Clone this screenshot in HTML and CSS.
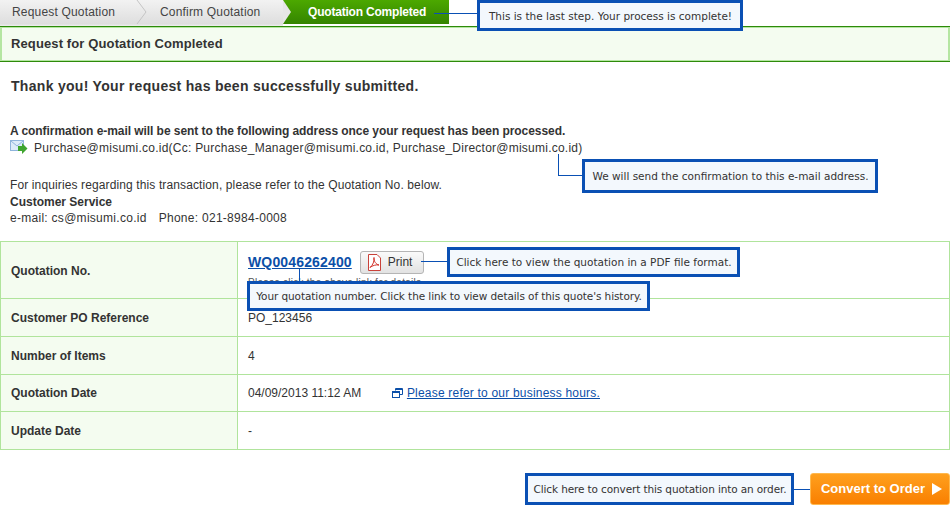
FILE: index.html

```html
<!DOCTYPE html>
<html lang="en">
<head>
  <meta charset="UTF-8" />
  <meta name="viewport" content="width=device-width, initial-scale=1.0"/>
  <title>Request for Quotation Completed</title>
  <link rel="stylesheet" href="styles.css">
</head>
<body>

  <div class="page">

    <div class="steps">
      <div class="steps-done">
        <div class="step step-first">Request Quotation</div>
        <svg class="step-arrow" width="16" height="24" viewBox="0 0 16 24"><path d="M1 0 L10 12 L1 24" fill="none" stroke="#c4c4c4"/></svg>
        <div class="step step-second">Confirm Quotation</div>
      </div>
      <div class="step-current">
        <svg class="step-notch" width="9" height="24" viewBox="0 0 9 24"><path d="M0 0 L8 12 L0 24 L0 0Z" fill="#e6e6e6"/></svg>
        Quotation Completed
      </div>
    </div>

    <h1 class="panel-title">Request for Quotation Completed</h1>

    <p class="thanks">Thank you! Your request has been successfully submitted.</p>

    <p class="confirm-head">A confirmation e-mail will be sent to the following address once your request has been processed.</p>
    <div class="mail-line">
      <svg class="mail-icon" width="18" height="15" viewBox="0 0 18 15">
        <rect x="0.5" y="0.5" width="13" height="10" fill="#dcebfa" stroke="#8fb4dc"/>
        <path d="M1 1 L7 6 L13 1" fill="none" stroke="#8fb4dc"/>
        <path d="M8 6 H12 V3 L17.5 8.5 L12 14 V11 H8Z" fill="#3fa52f"/>
      </svg>
      Purchase@misumi.co.id(Cc: Purchase_Manager@misumi.co.id, Purchase_Director@misumi.co.id)
    </div>

    <div class="contact">
      <div class="contact-intro">For inquiries regarding this transaction, please refer to the Quotation No. below.</div>
      <div class="contact-name">Customer Service</div>
      <div class="contact-info"><span>e-mail: cs@misumi.co.id</span><span>Phone: 021-8984-0008</span></div>
    </div>

    <table class="quote-table">
      <tr class="row-no">
        <th>Quotation No.</th>
        <td>
          <div class="quote-line">
            <a class="quote-no" href="#">WQ0046262400</a>
            <button class="print-btn">
              <svg width="15" height="17" viewBox="0 0 15 17">
                <path d="M1.5 0.5 H10 L13.5 4 V16.5 H1.5Z" fill="#fff" stroke="#c9423a"/>
                <path d="M3 13.5 C6 11 7.5 7 7 3.5 C6.5 7 9 10.5 12 11 C9 10.5 5.5 11.5 3 13.5Z" fill="none" stroke="#d2322a"/>
              </svg>
              Print
            </button>
          </div>
          <div class="quote-hint">Please click the above link for details.</div>
        </td>
      </tr>
      <tr class="row-po">
        <th>Customer PO Reference</th>
        <td>PO_123456</td>
      </tr>
      <tr class="row-items">
        <th>Number of Items</th>
        <td>4</td>
      </tr>
      <tr class="row-date">
        <th>Quotation Date</th>
        <td>
          <span class="date-text">04/09/2013 11:12 AM</span>
          <svg class="window-icon" width="11" height="10" viewBox="0 0 11 10">
            <path d="M3.5 2.5 V0.5 H10.5 V6.5 H8 M3 1.5 H10" fill="none" stroke="#0b4fa8"/>
            <rect x="0.5" y="3.5" width="7" height="6" fill="#fff" stroke="#0b4fa8"/>
            <path d="M1 4.5 H7" stroke="#0b4fa8"/>
          </svg>
          <a class="hours-link" href="#">Please refer to our business hours.</a>
        </td>
      </tr>
      <tr class="row-update">
        <th>Update Date</th>
        <td>-</td>
      </tr>
    </table>

    <div class="actions">
      <a class="convert-btn" href="#">Convert to Order <span class="convert-arrow"></span></a>
    </div>

    <!-- annotation overlays -->
    <div class="note note-step">This is the last step. Your process is complete!</div>
    <div class="line line-step"></div>

    <div class="note note-mail">We will send the confirmation to this e-mail address.</div>
    <div class="line line-mail-v"></div>
    <div class="line line-mail-h"></div>

    <div class="note note-pdf">Click here to view the quotation in a PDF file format.</div>
    <div class="line line-pdf"></div>

    <div class="note note-number">Your quotation number. Click the link to view details of this quote's history.</div>
    <div class="line line-number"></div>

    <div class="note note-order">Click here to convert this quotation into an order.</div>
    <div class="line line-order"></div>

  </div>

</body>
</html>
```

FILE: styles.css

```css
body {
  font-family: "Liberation Sans", Arial, sans-serif;
  font-size: 12px;
  color: #333;
  margin: 0;
  padding: 0;
  background: #fff;
}

.page {
  position: relative;
  width: 950px;
  height: 507px;
  overflow: hidden;
}

/* steps */
.steps {
  display: flex;
  height: 26px;
  width: 449px;
  line-height: 25px;
  color: #444;
}

.steps-done {
  display: flex;
  width: 283px;
  background: linear-gradient(#f2f2f2, #dedede 92%, #efefef);
  letter-spacing: 0.18px;
}

.step-first {
  width: 136px;
  padding-left: 12px;
  box-sizing: border-box;
}

.step-arrow {
  flex: none;
}

.step-second {
  width: 131px;
  padding-left: 8px;
  box-sizing: border-box;
}

.step-current {
  flex: 1;
  display: flex;
  align-items: center;
  gap: 16px;
  height: 24px;
  background: linear-gradient(#4ca800, #348400);
  color: #fff;
  font-weight: bold;
  letter-spacing: -0.2px;
}

.step-notch {
  flex: none;
}

/* title */
.panel-title {
  margin: 0;
  height: 36px;
  box-sizing: border-box;
  background: #f4fcf0;
  border-top: 1px solid #2d8a0a;
  border-bottom: 1px solid #2d8a0a;
  box-shadow: inset 2px 0 #b5e6a2, inset -2px 0 #b5e6a2, inset 0 1px #b5e6a2, inset 0 -1px #b5e6a2;
  padding: 0 11px;
  font-size: 13px;
  line-height: 34px;
  font-weight: bold;
  letter-spacing: 0.12px;
}

.thanks {
  margin: 15px 0 0 11px;
  font-size: 14px;
  line-height: 18px;
  font-weight: bold;
  letter-spacing: 0.3px;
}

.confirm-head {
  margin: 29px 0 0 10px;
  line-height: 14px;
  font-weight: bold;
  letter-spacing: -0.06px;
}

.mail-line {
  display: flex;
  align-items: center;
  margin: 1px 0 0 10px;
  height: 17px;
  letter-spacing: 0.24px;
}

.mail-icon {
  margin-right: 6px;
}

.contact {
  margin: 21px 0 0 10px;
  line-height: 16.5px;
}

.contact-intro {
  letter-spacing: 0.12px;
}

.contact-name {
  font-weight: bold;
}

.contact-info {
  display: flex;
  gap: 12px;
  letter-spacing: 0.28px;
}

/* table */
.quote-table {
  width: 950px;
  margin-top: 14px;
  border-collapse: collapse;
  table-layout: fixed;
}

.quote-table th,
.quote-table td {
  border: 1px solid #b0e49c;
  padding: 2px 10px 0;
  text-align: left;
  vertical-align: middle;
}

.quote-table .row-date th,
.quote-table .row-date td {
  padding-top: 0;
}

.quote-table th {
  width: 216px;
  background: #f4fcf0;
  font-weight: bold;
}

.row-no { height: 57px; }
.row-po { height: 38px; }
.row-items { height: 38px; }
.row-date { height: 37px; }
.row-update { height: 38px; }

.quote-line {
  display: flex;
  align-items: center;
  gap: 8px;
  margin-top: -2px;
}

.quote-no {
  font-size: 14px;
  font-weight: bold;
  color: #0b4fa8;
  letter-spacing: 0.15px;
}

.print-btn {
  display: flex;
  align-items: center;
  gap: 6px;
  width: 64px;
  height: 23px;
  padding: 0 0 0 6px;
  border: 1px solid #b5b5b5;
  border-radius: 3px;
  background: linear-gradient(#fafafa, #e2e2e2);
  font-family: inherit;
  font-size: 12px;
  color: #333;
}

.quote-hint {
  font-size: 10px;
  line-height: 12px;
  margin-top: 3px;
  letter-spacing: 0.25px;
  color: #555;
}

.date-text {
  margin-right: 27px;
}

.window-icon {
  margin-right: 1px;
  vertical-align: -1px;
}

.hours-link {
  color: #0b4fa8;
  letter-spacing: 0.2px;
}

/* button */
.actions {
  display: flex;
  justify-content: flex-end;
  margin-top: 23px;
}

.convert-btn {
  display: flex;
  align-items: center;
  justify-content: center;
  gap: 7px;
  width: 140px;
  height: 32px;
  padding-left: 3px;
  box-sizing: border-box;
  border: 1px solid #ffb84d;
  border-radius: 3px;
  background: linear-gradient(#ffa01e, #f97f00);
  color: #fff;
  font-size: 13px;
  font-weight: bold;
  text-decoration: none;
}

.convert-arrow {
  width: 0;
  height: 0;
  border-left: 10px solid #fff;
  border-top: 6px solid transparent;
  border-bottom: 6px solid transparent;
}

/* annotation callouts */
.note {
  position: absolute;
  box-sizing: border-box;
  border: 3px solid #0a50b4;
  background: #f3f8fd;
  color: #333;
  font-family: "DejaVu Sans", sans-serif;
  font-size: 10.5px;
  padding-left: 1px;
  text-align: center;
  white-space: nowrap;
}

.note-step {
  left: 477px;
  top: 0;
  width: 266px;
  height: 31px;
  line-height: 26px;
}

.note-mail {
  left: 582px;
  top: 159px;
  width: 296px;
  height: 34px;
  line-height: 28px;
}

.note-pdf {
  left: 447px;
  top: 247px;
  width: 293px;
  height: 30px;
  line-height: 24px;
}

.note-number {
  left: 247px;
  top: 281px;
  width: 403px;
  height: 30px;
  line-height: 24px;
  letter-spacing: -0.09px;
}

.note-order {
  left: 525px;
  top: 473px;
  width: 269px;
  height: 32px;
  line-height: 26px;
  letter-spacing: -0.12px;
}

.line {
  position: absolute;
  background: #0a50b4;
}

.line-step { left: 434px; top: 13px; width: 43px; height: 1px; }
.line-mail-v { left: 558px; top: 154px; width: 1px; height: 22px; }
.line-mail-h { left: 558px; top: 175px; width: 24px; height: 1px; }
.line-pdf { left: 421px; top: 261px; width: 26px; height: 1px; }
.line-number { left: 299px; top: 269px; width: 1px; height: 12px; }
.line-order { left: 794px; top: 489px; width: 16px; height: 1px; }
```
